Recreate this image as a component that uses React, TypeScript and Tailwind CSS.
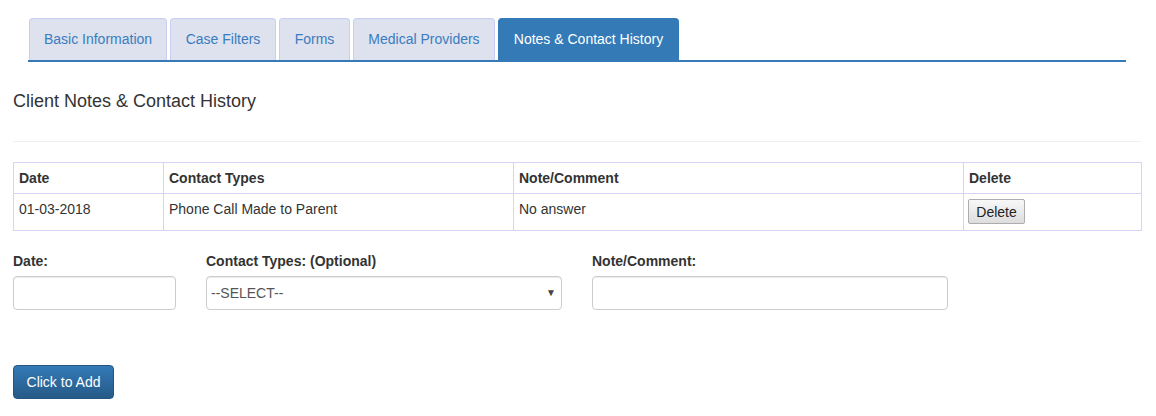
import React from "react";

const tabs: [string, string][] = [
  ["Basic Information", "w-[138px]"],
  ["Case Filters", "w-[106px]"],
  ["Forms", "w-[71px]"],
  ["Medical Providers", "w-[142px]"],
  ["Notes & Contact History", "w-[181px]"],
];

export default function App() {
  return (
    <div className="w-[1156px] h-[416px] bg-white text-[14px] leading-[20px] text-[#333]" style={{ fontFamily: '"Liberation Sans", Arial, sans-serif' }}>
      <div className="pl-[13px] pr-[15px] pt-[18px]">
        <div className="mx-[15px] flex gap-[3px] border-b-2 border-[#337ab7] pl-[1px]">
          {tabs.map(([t, w], i) =>
            i === 4 ? (
              <div key={t} className={`${w} h-[42px] py-[10px] text-center whitespace-nowrap rounded-t-[4px] bg-[#337ab7] border border-b-0 border-[#337ab7] text-white`}>{t}</div>
            ) : (
              <div key={t} className={`${w} h-[42px] py-[10px] text-center whitespace-nowrap rounded-t-[4px] bg-[#dde2ee] border border-b-0 border-[#c9cdf4] text-[#3a7cbf]`}>{t}</div>
            )
          )}
        </div>
        <h4 className="mt-[29px] text-[18px] leading-[20px] font-normal">Client Notes &amp; Contact History</h4>
        <div className="mt-[30px] border-t border-[#eeeeee]" />
        <table className="mt-[20px] w-[1128px] border-collapse border border-[#d4d4f4] table-fixed">
          <colgroup>
            <col className="w-[150px]" />
            <col className="w-[350px]" />
            <col className="w-[450px]" />
            <col className="w-[178px]" />
          </colgroup>
          <thead>
            <tr>
              <th className="border border-[#d4d4f4] text-left font-bold px-[5px] py-[5px] h-[31px]">Date</th>
              <th className="border border-[#d4d4f4] text-left font-bold px-[5px] py-[5px]">Contact Types</th>
              <th className="border border-[#d4d4f4] text-left font-bold px-[5px] py-[5px]">Note/Comment</th>
              <th className="border border-[#d4d4f4] text-left font-bold px-[5px] py-[5px]">Delete</th>
            </tr>
          </thead>
          <tbody>
            <tr>
              <td className="border border-[#d4d4f4] align-top px-[5px] pt-[5px] h-[37px]">01-03-2018</td>
              <td className="border border-[#d4d4f4] align-top px-[5px] pt-[5px]">Phone Call Made to Parent</td>
              <td className="border border-[#d4d4f4] align-top px-[5px] pt-[5px]">No answer</td>
              <td className="border border-[#d4d4f4] align-top px-[4px] pt-[5px]">
                <button className="w-[57px] h-[25px] text-[14px] leading-[20px] text-[#222] border border-[#adadad] rounded-[2px] bg-gradient-to-b from-[#f8f8f8] to-[#dddddd]">Delete</button>
              </td>
            </tr>
          </tbody>
        </table>
        <div className="mt-[20px] flex gap-[30px]">
          <div className="flex flex-col w-[163px]">
            <label className="font-bold mb-[5px]">Date:</label>
            <div className="h-[34px] border border-[#cccccc] rounded-[4px] bg-white shadow-[inset_0_1px_1px_rgba(0,0,0,0.075)]" />
          </div>
          <div className="flex flex-col w-[356px]">
            <label className="font-bold mb-[5px]">Contact Types: (Optional)</label>
            <div className="h-[34px] border border-[#cccccc] rounded-[4px] bg-white flex items-center justify-between pl-[4px] pr-[5px] text-[#555] shadow-[inset_0_1px_1px_rgba(0,0,0,0.075)]">
              <span>--SELECT--</span>
              <span className="text-[10px] text-[#444]">▼</span>
            </div>
          </div>
          <div className="flex flex-col w-[356px]">
            <label className="font-bold mb-[5px]">Note/Comment:</label>
            <div className="h-[34px] border border-[#cccccc] rounded-[4px] bg-white shadow-[inset_0_1px_1px_rgba(0,0,0,0.075)]" />
          </div>
        </div>
        <div className="mt-[55px]">
          <button className="w-[101px] h-[34px] text-white text-[14px] leading-[20px] rounded-[4px] border border-[#245580] bg-gradient-to-b from-[#337ab7] to-[#265a88]">Click to Add</button>
        </div>
      </div>
    </div>
  );
}
